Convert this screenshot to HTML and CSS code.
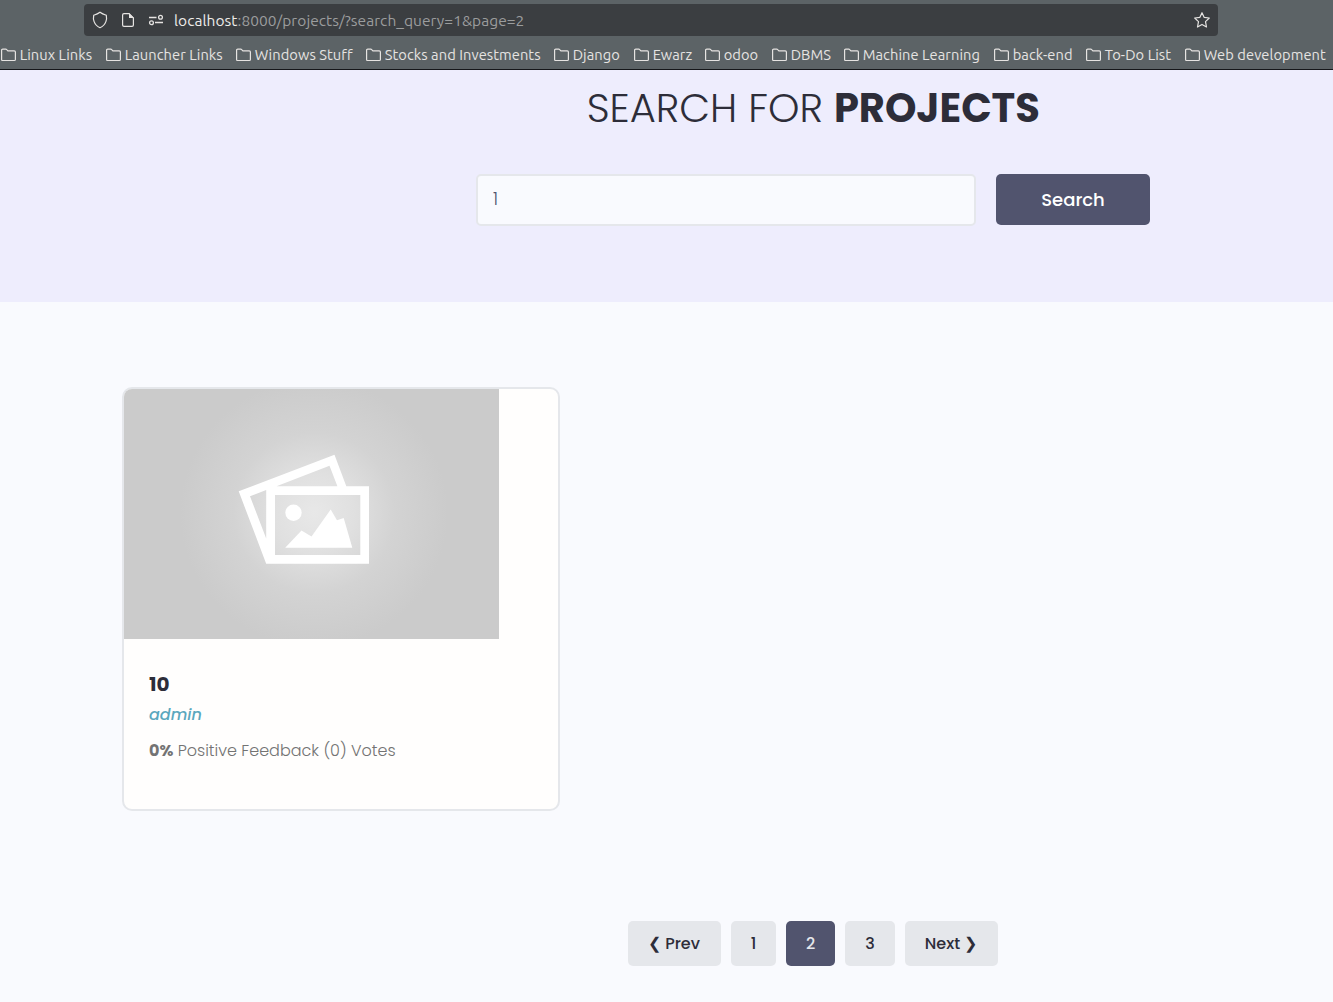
FILE: index.html
```html
<!DOCTYPE html>
<html lang="en">
<head>
<meta charset="utf-8">
<title>Projects</title>
<link rel="stylesheet" href="styles.css">
</head>
<body>
<svg class="sprite" width="0" height="0" aria-hidden="true">
  <symbol id="folder" viewBox="0 0 16 14"><path d="M1.600 11.400V2.200Q1.600 1.100 2.700 1.100H5.700Q6.300 1.100 6.700 1.600L7.900 2.900H14.300Q15.400 2.900 15.400 4V11.400Q15.400 12.500 14.300 12.500H2.700Q1.600 12.500 1.600 11.400Z" fill="none" stroke="currentColor" stroke-width="1.200"/></symbol>
</svg>
<header class="browser">
  <div class="address">
    <svg class="shield" width="16" height="18" viewBox="0 0 16 18"><path d="M8 1.300C9.700 2.600 12 3.600 14.300 4.300C15 7.500 14.600 13.800 8 16.700C1.400 13.800 1 7.500 1.700 4.300C4 3.600 6.300 2.600 8 1.300Z" fill="none" stroke="#e6e4e2" stroke-width="1.200"/></svg>
    <svg class="doc" width="14" height="16" viewBox="0 0 14 16"><path d="M8 1.600H3Q1.600 1.600 1.600 3V13Q1.600 14.400 3 14.400H11Q12.400 14.400 12.400 13V6Z" fill="none" stroke="#e6e4e2" stroke-width="1.200"/><path d="M8 1V6H13Z" fill="#e6e4e2"/></svg>
    <svg class="perm" width="16" height="12" viewBox="0 0 16 12" fill="none" stroke="#e6e4e2" stroke-width="1.300"><path d="M1 3.500H8.500M7 8.500H15"/><circle cx="12.500" cy="3.200" r="1.900"/><circle cx="3.500" cy="8.700" r="1.900"/></svg>
    <span class="url"><b>localhost</b>:8000/projects/?search_query=1&amp;page=2</span>
    <svg class="star" width="18" height="18" viewBox="0 0 18 18"><path d="M9 1.700L11.100 6.300L16.300 7L12.500 10.600L13.500 16L9 13.400L4.500 16L5.500 10.600L1.700 7L6.900 6.300Z" fill="none" stroke="#e6e4e2" stroke-width="1.200" stroke-linejoin="round"/></svg>
  </div>
  <nav class="bookmarks">
    <a class="bm w105"><svg><use href="#folder"/></svg>Linux Links</a>
    <a class="bm w130"><svg><use href="#folder"/></svg>Launcher Links</a>
    <a class="bm w130"><svg><use href="#folder"/></svg>Windows Stuff</a>
    <a class="bm w188"><svg><use href="#folder"/></svg>Stocks and Investments</a>
    <a class="bm w80"><svg><use href="#folder"/></svg>Django</a>
    <a class="bm w71"><svg><use href="#folder"/></svg>Ewarz</a>
    <a class="bm w67"><svg><use href="#folder"/></svg>odoo</a>
    <a class="bm w72"><svg><use href="#folder"/></svg>DBMS</a>
    <a class="bm w150"><svg><use href="#folder"/></svg>Machine Learning</a>
    <a class="bm w92"><svg><use href="#folder"/></svg>back-end</a>
    <a class="bm w99"><svg><use href="#folder"/></svg>To-Do List</a>
    <a class="bm w148"><svg><use href="#folder"/></svg>Web development</a>
  </nav>
</header>
<section class="hero">
  <h1>SEARCH FOR <strong>PROJECTS</strong></h1>
  <form class="search">
    <input class="query" type="text" value="1" aria-label="Search query">
    <button class="submit" type="button">Search</button>
  </form>
</section>
<main>
  <article class="card">
    <svg class="thumb" width="375" height="250" viewBox="0 0 375 250">
      <defs><radialGradient id="glow" gradientUnits="userSpaceOnUse" cx="190" cy="124" r="134"><stop offset="0" stop-color="#e8e8e8"/><stop offset=".3" stop-color="#e0e0e0"/><stop offset=".6" stop-color="#d3d3d3"/><stop offset="1" stop-color="#cbcbcb"/></radialGradient></defs>
      <rect width="375" height="250" fill="url(#glow)"/>
      <path fill="#fff" fill-rule="evenodd" d="M114.700 102.300L210.500 65.800L222.300 97.300H245V174.700H142.200ZM126 107.200L142.200 149.500V101ZM152.500 97.300H213.400L205.500 76.700ZM151 106V166H236.300V106Z"/>
      <circle cx="169.500" cy="123.700" r="8.200" fill="#fff"/>
      <path fill="#fff" d="M161.200 158.700L177.500 141.500L187.500 147.500L206.700 120.500L213 131.300L219.700 129L228.300 158.700Z"/>
    </svg>
    <div class="body">
      <h2>10</h2>
      <p class="author">admin</p>
      <p class="votes"><strong>0%</strong> Positive Feedback (0) Votes</p>
    </div>
  </article>
  <nav class="pages">
    <a class="page prev">&#10094; Prev</a>
    <a class="page one">1</a>
    <a class="page current">2</a>
    <a class="page three">3</a>
    <a class="page next">Next &#10095;</a>
  </nav>
</main>
</body>
</html>
```
FILE: styles.css
```css
* { box-sizing: border-box; }
body { margin: 0; width: 1333px; height: 1002px; overflow: hidden; background: #f9fafe; color: #2d2d39; font-family: Poppins, Inter, sans-serif; font-size: 16px; }
h1, h2, p { margin: 0; }
.sprite { display: block; }
.browser { height: 70px; padding-top: 4px; background: #5c6366; border-bottom: 1px solid #15171a; font-family: Ubuntu, "Noto Sans", sans-serif; color: #e6e4e2; }
.address { display: flex; align-items: center; width: 1134px; height: 32px; margin-left: 84px; padding: 0 7px 0 8px; border-radius: 4px; background: #3b3e41; }
.doc { margin-left: 13px; }
.perm { margin-left: 13px; }
.url { margin-left: 10px; font-size: 15.5px; letter-spacing: .05px; color: #9b9d9e; white-space: nowrap; }
.url b { font-weight: 400; color: #eeecea; }
.star { margin-left: auto; }
.bookmarks { display: flex; height: 33px; padding-top: 4px; }
.bm { display: flex; align-items: center; flex: none; font-size: 14.67px; letter-spacing: .07px; white-space: nowrap; }
.bm svg { width: 16px; height: 14px; margin-right: 3.7px; flex: none; }
.w105 { width: 105px; } .w130 { width: 130px; } .w188 { width: 188px; } .w80 { width: 80px; }
.w71 { width: 71px; } .w67 { width: 67px; } .w72 { width: 72px; } .w150 { width: 150px; }
.w92 { width: 92px; } .w99 { width: 99px; } .w148 { width: 148px; }
.hero { height: 232px; padding-top: 8px; background: #eeedfd; }
h1 { margin-left: 586.7px; font-size: 40px; font-weight: 300; line-height: 60px; white-space: nowrap; }
h1 strong { font-weight: 700; }
.search { display: flex; gap: 20px; margin: 36px 0 0 476px; }
.query { width: 500px; height: 52px; padding: 0 15px 2px; border: 2px solid #e5e7eb; border-radius: 5px; background: #f9fafe; color: #51546e; font: 300 17px Poppins, Inter, sans-serif; }
.submit { width: 154px; height: 51px; border: 0; border-radius: 5px; background: #51546e; color: #fff; font: 500 18px Poppins, Inter, sans-serif; }
main { padding-top: 85px; }
.card { width: 438px; height: 424px; margin-left: 122px; border: 2px solid #e5e7eb; border-radius: 10px; background: #fffefd; overflow: hidden; }
.thumb { display: block; }
.body { padding: 30px 25px; }
h2 { font-size: 20px; line-height: 30px; }
.author { margin-top: 4px; line-height: 24px; font-style: italic; font-weight: 500; color: #5aa7bd; }
.votes { margin-top: 12px; line-height: 24px; font-weight: 300; color: #737373; white-space: nowrap; }
.votes strong { font-weight: 700; }
.pages { display: flex; gap: 10px; margin: 110px 0 0 628px; }
.page { display: flex; align-items: center; justify-content: center; height: 45px; border-radius: 5px; background: #e5e7eb; font-weight: 500; white-space: nowrap; }
.prev { width: 93px; padding-right: 1px; } .one { width: 45px; } .current { width: 49px; background: #51546e; color: #e5e7eb; }
.three { width: 50px; } .next { width: 93px; padding-right: 1px; }
```
